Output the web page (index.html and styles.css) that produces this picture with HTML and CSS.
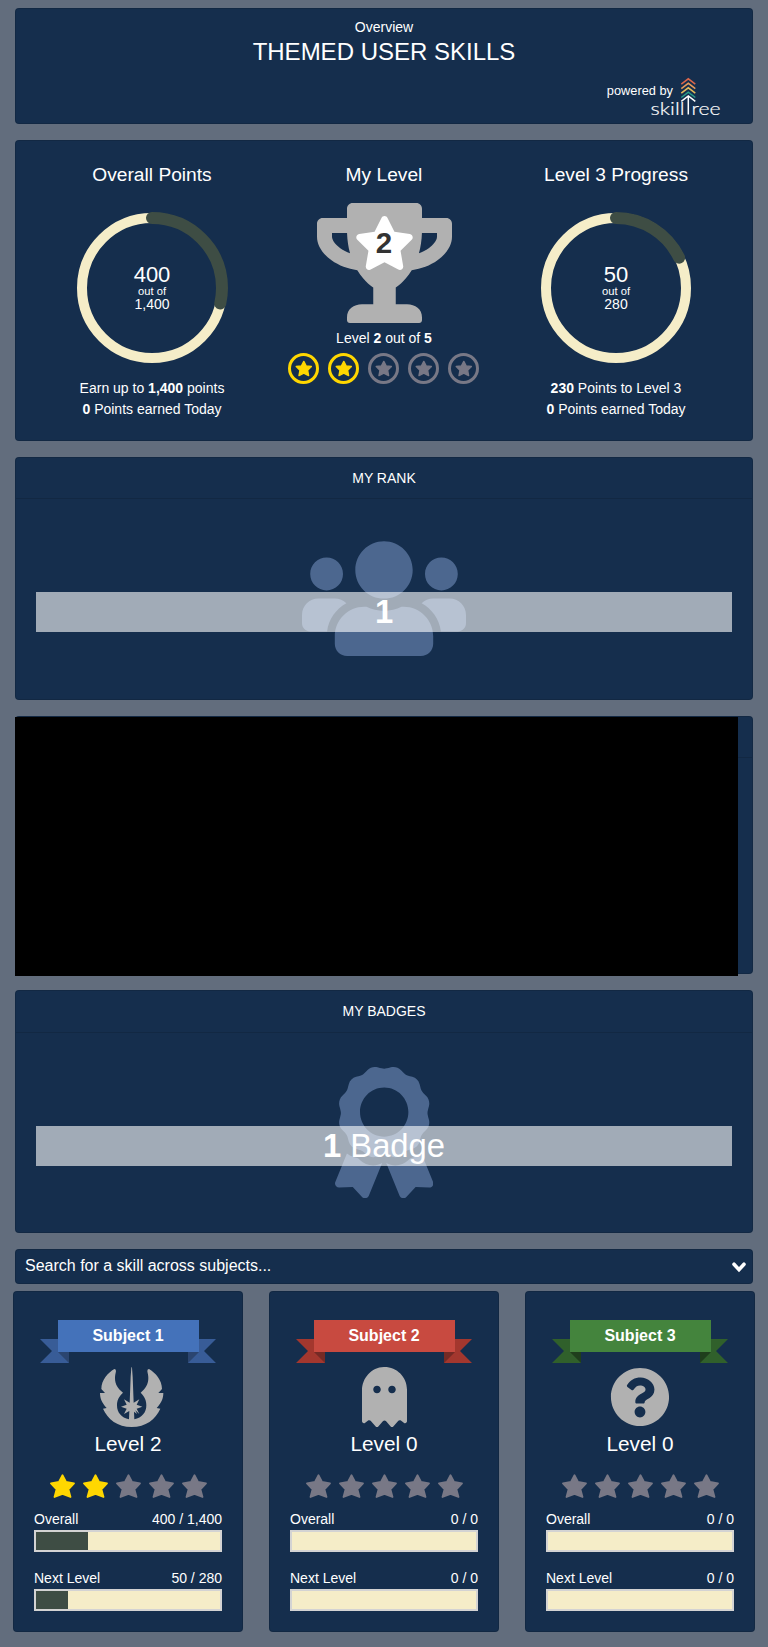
FILE: index.html
```html
<!DOCTYPE html>
<html lang="en">
<head>
<meta charset="utf-8">
<title>Themed User Skills</title>
<link rel="stylesheet" href="styles.css">
</head>
<body>
<svg class="defs" width="0" height="0" aria-hidden="true">
  <symbol id="star" viewBox="0 0 25 24"><path d="M12.500 1.200 L16 8 24 9.400 18.400 15.300 20.500 23 12.500 19.900 4.500 23 6.600 15.300 1 9.400 9 8Z" fill="currentColor" stroke="currentColor" stroke-width="1.800" stroke-linejoin="round"/></symbol>
  <symbol id="ring-star" viewBox="0 0 31 31"><circle cx="15.500" cy="15.500" r="14" fill="none" stroke="currentColor" stroke-width="3"/><path d="M15.800 8.400 L18.100 12.900 23.400 13.500 19.600 17.200 20.600 22.600 15.800 20.100 11 22.600 12 17.200 8.200 13.500 13.500 12.900Z" fill="currentColor" stroke="currentColor" stroke-width="1.400" stroke-linejoin="round"/></symbol>
</svg>
<main class="page">
  <header class="card head">
    <div class="head-sub">Overview</div>
    <h1 class="head-title">THEMED USER SKILLS</h1>
    <div class="powered">
      <span class="powered-text">powered by</span>
      <svg class="logo" viewBox="0 0 72 42" width="72" height="42">
        <g fill="none" stroke-width="1.500">
          <path stroke="#d9674c" d="M31.300 8.200 38.300 2.800 45.300 8.200"/>
          <path stroke="#e79a5b" d="M31.300 12.700 38.300 7.300 45.300 12.700"/>
          <path stroke="#e3b95a" d="M31.300 17.200 38.300 11.800 45.300 17.200"/>
          <path stroke="#2a9d8a" d="M31.300 21.500 38.300 16.100 45.300 21.500"/>
          <path stroke="#fff" d="M31.300 25.300 38.300 20 45.300 25.300M38.300 20V38.500"/>
        </g>
        <text class="logo-text" x="0.500" y="38.500" textLength="34" lengthAdjust="spacingAndGlyphs">skill</text>
        <text class="logo-text" x="41.500" y="38.500" textLength="29" lengthAdjust="spacingAndGlyphs">ree</text>
      </svg>
    </div>
  </header>

  <section class="card overview">
    <div class="col">
      <h2 class="col-title">Overall Points</h2>
      <div class="dial">
        <svg class="dial-ring" viewBox="-76 -76 152 152" width="152" height="152">
          <circle class="dial-track" r="70"/>
          <circle class="dial-value" r="70" pathLength="1400" stroke-dasharray="400 1400" transform="rotate(-90)"/>
        </svg>
        <div class="dial-text"><span class="dial-big">400</span><span class="dial-small">out of</span><span class="dial-mid">1,400</span></div>
      </div>
      <div class="facts"><div>Earn up to <b>1,400</b> points</div><div><b>0</b> Points earned Today</div></div>
    </div>
    <div class="col">
      <h2 class="col-title">My Level</h2>
      <div class="trophy">
        <svg viewBox="0 0 576 512" width="135" height="120"><path fill="#b1b1b1" d="M552 64H448V24c0-13.300-10.700-24-24-24H152c-13.300 0-24 10.700-24 24v40H24C10.700 64 0 74.700 0 88v56c0 35.700 22.500 72.400 61.900 100.700 31.500 22.700 69.800 37.100 110 41.700C203.300 338.500 240 360 240 360v72h-48c-35.300 0-64 20.700-64 56v12c0 6.600 5.400 12 12 12h296c6.600 0 12-5.400 12-12v-12c0-35.300-28.700-56-64-56h-48v-72s36.700-21.500 68.100-73.600c40.300-4.600 78.600-19 110-41.700 39.300-28.300 61.900-65 61.900-100.700V88c0-13.300-10.700-24-24-24zM99.300 192.800C74.900 175.200 64 155.600 64 144v-16h64.200c1 32.600 5.800 61.200 12.800 86.200-15.100-5.200-29.200-12.400-41.700-21.400zM512 144c0 16.100-17.700 36.100-35.300 48.800-12.500 9-26.700 16.200-41.800 21.400 7-25 11.800-53.600 12.800-86.200H512v16z"/></svg>
        <svg class="trophy-star" viewBox="0 0 576 512" width="61" height="54"><path fill="#fff" d="M259.300 17.800L194 150.200 47.900 171.500c-26.200 3.800-36.700 36.100-17.700 54.600l105.700 103-25 145.500c-4.500 26.300 23.200 46 46.400 33.700L288 439.600l130.700 68.700c23.200 12.200 50.900-7.400 46.400-33.700l-25-145.500 105.700-103c19-18.500 8.500-50.800-17.700-54.600L382 150.200 316.700 17.800c-11.700-23.600-45.600-23.900-57.400 0z"/></svg>
        <span class="trophy-num">2</span>
      </div>
      <div class="level-line">Level <b>2</b> out of <b>5</b></div>
      <div class="ring-stars">
        <svg class="on"><use href="#ring-star"/></svg><svg class="on"><use href="#ring-star"/></svg><svg><use href="#ring-star"/></svg><svg><use href="#ring-star"/></svg><svg><use href="#ring-star"/></svg>
      </div>
    </div>
    <div class="col">
      <h2 class="col-title">Level 3 Progress</h2>
      <div class="dial">
        <svg class="dial-ring" viewBox="-76 -76 152 152" width="152" height="152">
          <circle class="dial-track" r="70"/>
          <circle class="dial-value" r="70" pathLength="280" stroke-dasharray="50 280" transform="rotate(-90)"/>
        </svg>
        <div class="dial-text"><span class="dial-big">50</span><span class="dial-small">out of</span><span class="dial-mid">280</span></div>
      </div>
      <div class="facts"><div><b>230</b> Points to Level 3</div><div><b>0</b> Points earned Today</div></div>
    </div>
  </section>

  <section class="card stat rank">
    <h2 class="stat-head">MY RANK</h2>
    <div class="stat-body">
      <svg class="mark" viewBox="0 0 640 512" width="164" height="131.200"><path d="M96 224c35.300 0 64-28.700 64-64s-28.700-64-64-64-64 28.700-64 64 28.700 64 64 64zm448 0c35.300 0 64-28.700 64-64s-28.700-64-64-64-64 28.700-64 64 28.700 64 64 64zm32 32h-64c-17.600 0-33.500 7.100-45.100 18.600 40.300 22.100 68.900 62 75.100 109.400h66c17.700 0 32-14.300 32-32v-32c0-35.300-28.700-64-64-64zm-256 0c61.900 0 112-50.100 112-112S381.900 32 320 32 208 82.100 208 144s50.100 112 112 112zm76.800 32h-8.300c-20.800 10-43.900 16-68.500 16s-47.600-6-68.500-16h-8.300C179.600 288 128 339.600 128 403.200V432c0 26.500 21.500 48 48 48h288c26.500 0 48-21.500 48-48v-28.800c0-63.600-51.600-115.200-115.200-115.200zm-223.700-13.400C161.500 263.100 145.600 256 128 256H64c-35.300 0-64 28.700-64 64v32c0 17.700 14.300 32 32 32h65.900c6.300-47.400 34.900-87.300 75.200-109.400z"/></svg>
      <div class="band"><b>1</b></div>
    </div>
  </section>

  <section class="card stat media">
    <div class="stat-head"></div>
    <div class="video"></div>
  </section>

  <section class="card stat badges">
    <h2 class="stat-head">MY BADGES</h2>
    <div class="stat-body">
      <svg class="mark" viewBox="0 0 384 512" width="98.400" height="131.200"><path d="M97.120 362.630c-8.690-8.690-4.160-6.240-25.120-11.850-9.510-2.550-17.870-7.450-25.430-13.320L1.200 448.700c-4.390 10.770 3.810 22.470 15.430 22.030l52.690-2.010L105.560 507c8 8.440 22.040 5.810 26.430-4.960l52.050-127.620c-10.840 6.040-22.870 9.580-35.310 9.580-19.500 0-37.820-7.590-51.610-21.370zM382.800 448.700l-45.370-111.240c-7.560 5.880-15.920 10.770-25.430 13.320-21.070 5.640-16.450 3.180-25.120 11.850-13.790 13.780-32.120 21.370-51.620 21.370-12.440 0-24.470-3.550-35.310-9.580L252 502.040c4.390 10.770 18.440 13.400 26.430 4.960l36.250-38.280 52.690 2.010c11.620.44 19.820-11.270 15.430-22.030zM263 340c15.280-15.550 17.030-14.210 38.790-20.140 13.890-3.790 24.750-14.840 28.470-28.980 7.480-28.400 5.540-24.970 25.950-45.750 10.170-10.350 14.140-25.440 10.420-39.580-7.470-28.380-7.480-24.420 0-52.830 3.720-14.140-.25-29.230-10.420-39.580-20.410-20.780-18.470-17.360-25.950-45.750-3.720-14.140-14.580-25.190-28.470-28.980-27.880-7.610-24.520-5.620-44.950-26.410-10.170-10.350-25-14.400-38.890-10.610-27.870 7.600-23.980 7.610-51.900 0-13.890-3.790-28.720.25-38.890 10.610-20.410 20.780-17.050 18.800-44.940 26.410-13.890 3.790-24.750 14.840-28.470 28.980-7.470 28.390-5.540 24.970-25.950 45.750-10.170 10.350-14.150 25.440-10.420 39.580 7.470 28.360 7.480 24.400 0 52.820-3.720 14.140.25 29.230 10.420 39.590 20.410 20.780 18.470 17.350 25.950 45.750 3.720 14.140 14.580 25.190 28.470 28.980C104.600 325.960 106.270 325 121 340c13.230 13.470 33.840 15.880 49.740 5.820a39.676 39.676 0 0 1 42.530 0c15.890 10.060 36.500 7.650 49.730-5.820zM97.660 175.960c0-53.030 42.240-96.020 94.340-96.020s94.340 42.990 94.340 96.020-42.240 96.020-94.340 96.020-94.340-42.990-94.340-96.020z"/></svg>
      <div class="band"><b>1</b>&nbsp;Badge</div>
    </div>
  </section>

  <div class="card search"><span>Search for a skill across subjects...</span>
    <svg width="16" height="12" viewBox="0 0 16 12"><path d="M3 3.200 8 8.600 13 3.200" fill="none" stroke="#fff" stroke-width="3.600" stroke-linecap="round"/></svg>
  </div>

  <section class="subjects">
    <article class="card subject">
      <div class="ribbon blue">
        <svg class="ribbon-tails" viewBox="0 0 176 24" width="176" height="24"><path class="tail" d="M0 0H29V24H0L12 12ZM176 0H148V24H176L164 12Z"/><path class="fold" d="M18 13H29V24ZM159 13H148V24Z"/></svg>
        <div class="ribbon-front">Subject 1</div>
      </div>
      <svg class="subject-icon" viewBox="282 411 202.500 180" width="67.500" height="60"><path d="M343 417C324 428 304 450 304 477L315 489H300C300 506 306 519 320 534L309 536C323 568 353 591 395 591C437 591 467 568 481 536L470 534C484 519 490 506 490 489H475L486 477C486 450 466 428 447 417Q442 417 442 423C443 430 445 436 445 444C445 462 437 475 422 488C434 500 439 511 439 526C439 548 426 563 403 568L402 545 411 552 406 541 418 552 410 536 427 530 410 524 418 508 401 518 398 440 396 413Q395 409 394 413L392 440 389 518 372 508 380 524 363 530 380 536 372 552 388 543 387 568C364 563 351 548 351 526C351 511 356 500 369 488C353 475 345 462 345 444C345 436 347 430 348 423Q348 417 343 417Z"/></svg>
      <div class="subject-level">Level 2</div>
      <div class="stars"><svg class="on"><use href="#star"/></svg><svg class="on"><use href="#star"/></svg><svg><use href="#star"/></svg><svg><use href="#star"/></svg><svg><use href="#star"/></svg></div>
      <div class="meter"><div class="meter-label"><span>Overall</span><span>400 / 1,400</span></div><div class="bar"><div class="fill" style="width:28.500%"></div></div></div>
      <div class="meter"><div class="meter-label"><span>Next Level</span><span>50 / 280</span></div><div class="bar"><div class="fill" style="width:17.600%"></div></div></div>
    </article>
    <article class="card subject">
      <div class="ribbon red">
        <svg class="ribbon-tails" viewBox="0 0 176 24" width="176" height="24"><path class="tail" d="M0 0H29V24H0L12 12ZM176 0H148V24H176L164 12Z"/><path class="fold" d="M18 13H29V24ZM159 13H148V24Z"/></svg>
        <div class="ribbon-front">Subject 2</div>
      </div>
      <svg class="subject-icon" viewBox="0 0 384 512" width="45" height="60"><path d="M186.100.09C81.010 3.240 0 94.920 0 200.050v263.920c0 14.260 17.230 21.390 27.310 11.310l24.920-18.530c6.660-4.950 16-3.990 21.510 2.210l42.950 48.350c6.250 6.250 16.380 6.250 22.630 0l40.720-45.850c6.370-7.170 17.560-7.170 23.920 0l40.720 45.850c6.250 6.250 16.380 6.250 22.630 0l42.950-48.350c5.510-6.200 14.850-7.170 21.510-2.210l24.920 18.530c10.080 10.080 27.310 2.940 27.310-11.310V192C384 84 294.830-3.170 186.100.09zM128 224c-17.670 0-32-14.330-32-32s14.330-32 32-32 32 14.330 32 32-14.330 32-32 32zm128 0c-17.670 0-32-14.330-32-32s14.330-32 32-32 32 14.330 32 32-14.330 32-32 32z"/></svg>
      <div class="subject-level">Level 0</div>
      <div class="stars"><svg><use href="#star"/></svg><svg><use href="#star"/></svg><svg><use href="#star"/></svg><svg><use href="#star"/></svg><svg><use href="#star"/></svg></div>
      <div class="meter"><div class="meter-label"><span>Overall</span><span>0 / 0</span></div><div class="bar"></div></div>
      <div class="meter"><div class="meter-label"><span>Next Level</span><span>0 / 0</span></div><div class="bar"></div></div>
    </article>
    <article class="card subject">
      <div class="ribbon green">
        <svg class="ribbon-tails" viewBox="0 0 176 24" width="176" height="24"><path class="tail" d="M0 0H29V24H0L12 12ZM176 0H148V24H176L164 12Z"/><path class="fold" d="M18 13H29V24ZM159 13H148V24Z"/></svg>
        <div class="ribbon-front">Subject 3</div>
      </div>
      <svg class="subject-icon" viewBox="0 0 512 512" width="60" height="60"><path d="M504 256c0 136.997-111.043 248-248 248S8 392.997 8 256C8 119.083 119.043 8 256 8s248 111.083 248 248zM262.655 90c-54.497 0-89.255 22.957-116.549 63.758-3.536 5.286-2.353 12.415 2.715 16.258l34.699 26.310c5.205 3.947 12.621 3.008 16.665-2.122 17.864-22.658 30.113-35.797 57.303-35.797 20.429 0 45.698 13.148 45.698 32.958 0 14.976-12.363 22.667-32.534 33.976C247.128 238.528 216 254.941 216 296v4c0 6.627 5.373 12 12 12h56c6.627 0 12-5.373 12-12v-1.333c0-28.462 83.186-29.647 83.186-106.667 0-58.002-60.165-102-116.531-102zM256 338c-25.365 0-46 20.635-46 46 0 25.364 20.635 46 46 46s46-20.636 46-46c0-25.365-20.635-46-46-46z"/></svg>
      <div class="subject-level">Level 0</div>
      <div class="stars"><svg><use href="#star"/></svg><svg><use href="#star"/></svg><svg><use href="#star"/></svg><svg><use href="#star"/></svg><svg><use href="#star"/></svg></div>
      <div class="meter"><div class="meter-label"><span>Overall</span><span>0 / 0</span></div><div class="bar"></div></div>
      <div class="meter"><div class="meter-label"><span>Next Level</span><span>0 / 0</span></div><div class="bar"></div></div>
    </article>
  </section>
</main>
</body>
</html>
```
FILE: styles.css
```css
* { box-sizing: border-box; }
body { margin: 0; background: #626d7d; color: #fff; font: 14px/21px "Liberation Sans", Arial, sans-serif; }
h1, h2 { margin: 0; font-weight: 400; }
svg { display: block; flex: none; }
.defs { position: absolute; }
.page { height: 1647px; padding: 8px 15px 0; display: flex; flex-direction: column; }
.card { flex: none; background: #152e4d; border: 1px solid rgba(0, 0, 0, .125); border-radius: 4px; }

.head { height: 116px; margin-bottom: 16px; padding-top: 8px; text-align: center; }
.head-title { font-size: 24px; line-height: 27px; }
.powered { display: flex; justify-content: flex-end; margin-top: 11px; padding-right: 30px; }
.powered-text { font-size: 12.800px; margin: 4px -23px 0 0; }
.logo-text { font: 300 17.500px Lato, sans-serif; fill: #fff; stroke: #fff; stroke-width: .2px; }

.overview { height: 301px; margin-bottom: 16px; padding: 0 20px; display: grid; grid-template-columns: repeat(3, 232px); justify-content: center; }
.col { display: flex; flex-direction: column; align-items: center; }
.col-title { font-size: 19.200px; line-height: 24px; margin-top: 22px; }
.dial { display: grid; place-items: center; margin-top: 25px; }
.dial-ring, .dial-text { grid-area: 1 / 1; }
.dial-track { fill: none; stroke: #f5edc8; stroke-width: 10; }
.dial-value { fill: none; stroke: #3e4d44; stroke-width: 12; stroke-linecap: round; }
.dial-text { display: flex; flex-direction: column; align-items: center; }
.dial-big { font-size: 22px; line-height: 20px; }
.dial-small { font-size: 11.200px; line-height: 13px; }
.dial-mid { font-size: 14px; line-height: 12px; margin-bottom: 2px; }
.facts { margin-top: 14px; text-align: center; }
.trophy { display: grid; justify-items: center; margin-top: 16px; }
.trophy > * { grid-area: 1 / 1; }
.trophy-star { margin-top: 13px; }
.trophy-num { margin-top: 24px; font-size: 29.500px; line-height: 32px; font-weight: 700; color: #333; }
.level-line { margin-top: 5px; }
.ring-stars { display: flex; gap: 9px; margin: 4px 1px 0 0; color: #787886; }
.ring-stars svg { width: 31px; height: 31px; }
.ring-stars .on, .stars .on { color: gold; }

.stat { height: 243px; margin-bottom: 16px; }
.stat-head { height: 41px; border-bottom: 1px solid rgba(0, 0, 0, .125); font-size: 14px; line-height: 41px; text-align: center; }
.badges .stat-head { height: 42px; }
.stat-body { display: grid; justify-items: center; padding: 0 20px; }
.stat-body > * { grid-area: 1 / 1; }
.mark { fill: #4c678f; margin-top: 34px; }
.band { width: 100%; height: 40px; margin-top: 93px; background: rgba(255, 255, 255, .6); font-size: 32.800px; line-height: 39px; text-align: center; }
.media { height: 258px; }
.video { width: 723px; height: 259px; margin: -41px 0 0 -1px; background: #000; }

.search { height: 35px; margin-bottom: 7px; padding: 0 5px 0 9px; display: flex; align-items: center; justify-content: space-between; font-size: 16px; }
.search span { margin-bottom: 2px; }

.subjects { display: grid; grid-template-columns: repeat(3, 230px); gap: 26px; margin: 0 -2px; }
.subject { height: 341px; padding: 28px 20px 0; }
.ribbon { display: grid; justify-items: center; height: 44px; }
.ribbon > * { grid-area: 1 / 1; }
.ribbon-tails { margin-top: 19px; }
.ribbon-front { width: 141px; height: 32px; font-size: 16px; line-height: 31px; font-weight: 700; text-align: center; }
.blue .ribbon-front { background: #4472ba; }
.blue .tail { fill: #385c97; }
.blue .fold { fill: #2b4570; }
.red .ribbon-front { background: #c84a40; }
.red .tail { fill: #a3372e; }
.red .fold { fill: #752a25; }
.green .ribbon-front { background: #44843d; }
.green .tail { fill: #30602b; }
.green .fold { fill: #1f3e1c; }
.subject-icon { margin: 3px auto 0; fill: #b1b1b1; overflow: visible; }
.subject-level { margin-top: 4px; font-size: 20.800px; line-height: 25px; text-align: center; }
.stars { display: flex; justify-content: center; gap: 8px; margin: 18px 0 11px; color: #787886; }
.stars svg { width: 25px; height: 24px; }
.meter { margin-bottom: 16px; }
.meter-label { display: flex; justify-content: space-between; }
.bar { height: 22px; background: #f5edc8; border: 2px solid #d3d3d3; }
.fill { height: 100%; background: #3e4d44; }
```
